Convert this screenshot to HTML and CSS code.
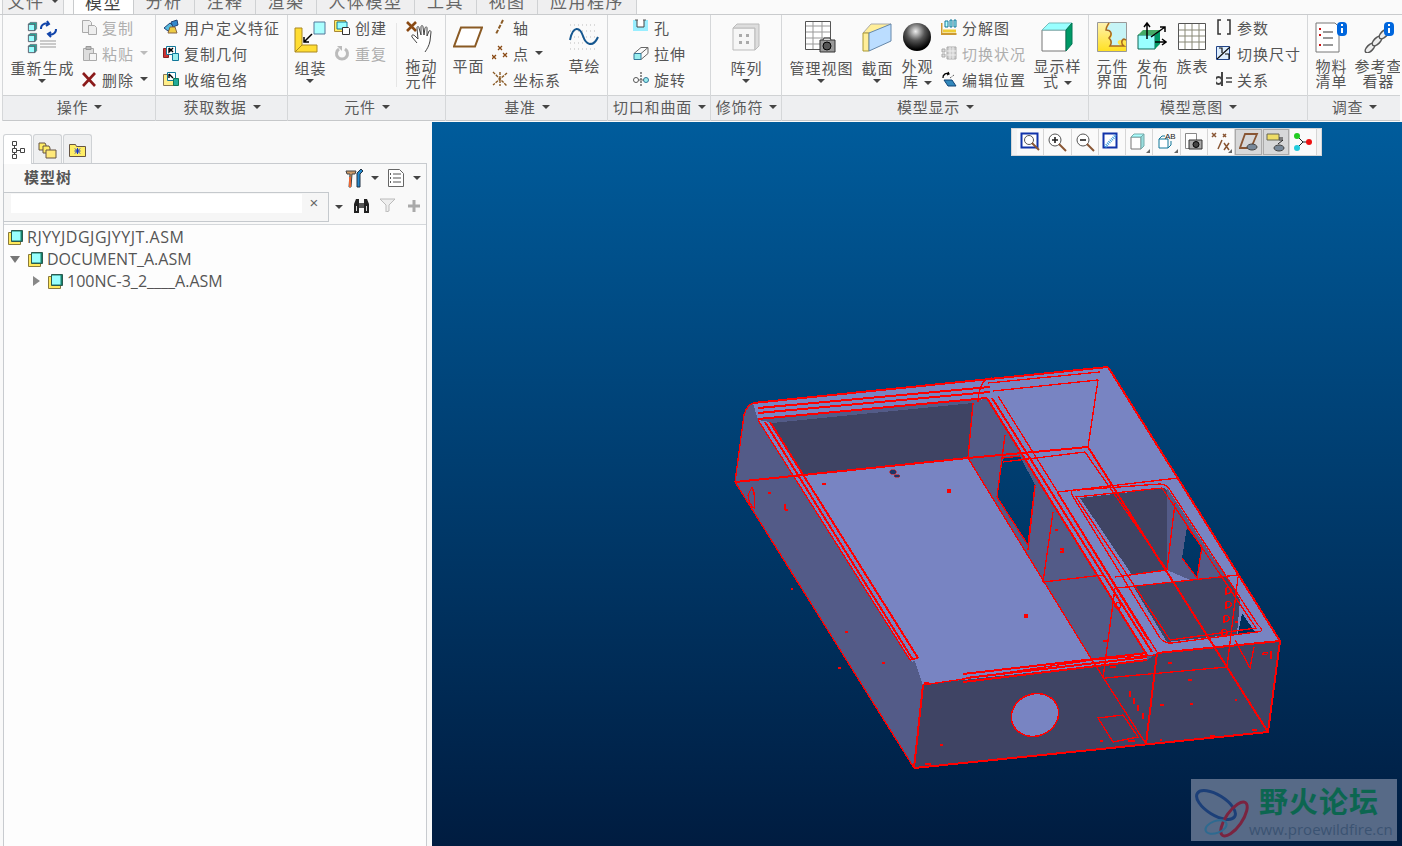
FILE: index.html
```html
<!DOCTYPE html>
<html lang="zh">
<head>
<meta charset="utf-8">
<title>模型树</title>
<link rel="stylesheet" href="styles.css">
</head>
<body>
<svg class="defs" width="0" height="0">
  <symbol id="cube" viewBox="0 0 12 12"><path d="M1.500 3.500h7v7h-7z" fill="#9ff" stroke="#556"/><path d="M1.500 3.500l2-2h7v7l-2 2v-7z" fill="#2a9" stroke="#556" stroke-width=".7"/></symbol>
  <symbol id="asm" viewBox="0 0 15 15"><path d="M.5 2.500h12v12H.5z" fill="#ffe95c" stroke="#8a7a3a"/><path d="M3.500.5h11v11h-11z" fill="#17806a" stroke="#2a5a50"/><path d="M4 1.500h8.500v9H4z" fill="#9ff"/></symbol>
</svg>
<nav class="tabs">
  <div class="tab t-file">文件<i class="caret"></i></div>
  <div class="tab active">模型</div>
  <div class="tab t61">分析</div>
  <div class="tab t61">注释</div>
  <div class="tab t61">渲染</div>
  <div class="tab t98">人体模型</div>
  <div class="tab t62">工具</div>
  <div class="tab t61">视图</div>
  <div class="tab t99">应用程序</div>
</nav>
<header class="ribbon">
  <section class="group g153">
    <div class="gbody">
      <div class="big w78"><div class="ic"><svg width="32" height="34" viewBox="0 0 32 34"><use href="#cube" x="1" y="1" width="11" height="11"/><use href="#cube" x="1" y="12" width="11" height="11"/><use href="#cube" x="1" y="23" width="11" height="11"/><path d="M15 9a5 5 0 0 1 7-5M21 1l2 3-3 2M30 9a5 5 0 0 1-7 5M25 17l-3-3 3-2" fill="none" stroke="#14a" stroke-width="2"/><path d="M14 21h16M14 24h16M14 27h16" stroke="#999"/></svg></div><div class="lbl one">重新生成</div><i class="caret under"></i></div>
      <div class="small">
        <div class="row off"><svg class="i" viewBox="0 0 16 16"><path d="M1.500 1.500h7l2 2v3h-3v7h-6z" fill="#eee" stroke="#aaa"/><path d="M7.500 6.500h6l2 2v7h-8z" fill="#eee" stroke="#aaa"/></svg>复制</div>
        <div class="row off"><svg class="i" viewBox="0 0 16 16"><path d="M2.500 3.500h10v12h-10z" fill="#ddd" stroke="#aaa"/><path d="M5 1.500h5v3H5z" fill="#bbb" stroke="#999"/><path d="M8.500 8.500h7v7h-7z" fill="#f4f4f4" stroke="#aaa"/></svg>粘贴<i class="caret soft"></i></div>
        <div class="row"><svg class="i" viewBox="0 0 16 16"><path d="M2 2l12 13M14 2L2 15" stroke="#8b1a1a" stroke-width="2.600"/></svg>删除<i class="caret"></i></div>
      </div>
    </div>
    <div class="glabel">操作<i class="caret"></i></div>
  </section>
  <section class="group g132">
    <div class="gbody pad7">
      <div class="small">
        <div class="row"><svg class="i" viewBox="0 0 16 16"><path d="M1 9l6-5 3 3-5 5z" fill="#5bd" stroke="#247"/><path d="M8 3l6-2 1 5-5 2z" fill="#38c" stroke="#247"/><path d="M7 8l5 0 2 6H5z" fill="#ec4" stroke="#864"/></svg>用户定义特征</div>
        <div class="row"><svg class="i" viewBox="0 0 16 16"><path d="M.5 3.500h5v9h-5z" fill="#c33" stroke="#822"/><path d="M3.500 1.500h9v8h-9z" fill="#fff" stroke="#179"/><path d="M6 3l4 4M6 3v4l4-4" stroke="#000" stroke-width="1.400" fill="none"/><path d="M9.500 8.500h6v7h-6z" fill="#9ee" stroke="#179"/></svg>复制几何</div>
        <div class="row"><svg class="i" viewBox="0 0 16 16"><path d="M.5 3.500h11v11H.5z" fill="#fe8" stroke="#875"/><path d="M4.500 1.500h8v8h-8z" fill="#fff" stroke="#179"/><path d="M6 3l4 4M6 3v4" stroke="#000" stroke-width="1.400" fill="none"/><path d="M10.500 7.500h5v7h-5z" fill="#2a9" stroke="#175"/></svg>收缩包络</div>
      </div>
    </div>
    <div class="glabel">获取数据<i class="caret"></i></div>
  </section>
  <section class="group g158">
    <div class="gbody">
      <div class="big w44"><div class="ic"><svg width="32" height="32" viewBox="0 0 32 32"><path d="M1 7h7v17h15v7H1z" fill="#fd3" stroke="#a82"/><path d="M1 31l7-7" stroke="#a82"/><path d="M20 1h11v12H20z" fill="#aff" stroke="#579"/><path d="M18 13L10 21M10 16v5h5" stroke="#000" stroke-width="1.500" fill="none"/></svg></div><div class="lbl one">组装</div><i class="caret under"></i></div>
      <div class="small w62 ml2">
        <div class="row"><svg class="i" viewBox="0 0 16 16"><path d="M.5 1.500h11v11H.5z" fill="#fe6" stroke="#a83"/><path d="M3 3h10v7H3z" fill="#9ff" stroke="#179"/><path d="M8.500 8.500h6l1 1v6h-7z" fill="#fff" stroke="#333"/></svg>创建</div>
        <div class="row off"><svg class="i" viewBox="0 0 16 16"><path d="M11 4a5.500 5.500 0 1 1-6 0" fill="none" stroke="#bbb" stroke-width="3"/><path d="M3 1h5v5z" fill="#bbb"/></svg>重复</div>
      </div>
      <div class="vsep"></div>
      <div class="big w48"><div class="ic"><svg width="31" height="32" viewBox="0 0 31 32"><path d="M1 1l9 9M10 1L1 10" stroke="#8a4a14" stroke-width="2.600"/><path d="M11 22l-5-6c-1-2 1-3 3-1l3 3-1-11c0-2 2-2 2 0l2 7 0-8c0-2 2-2 2 0l1 8 1-7c1-2 2-1 2 0l0 8 2-5c1-1 2 0 2 1l-1 9c-1 5-3 8-5 11" fill="#fff" stroke="#444"/></svg></div><div class="lbl">拖动<br>元件</div></div>
    </div>
    <div class="glabel">元件<i class="caret"></i></div>
  </section>
  <section class="group g162">
    <div class="gbody">
      <div class="big w44"><div class="ic"><svg width="30" height="22" viewBox="0 0 30 22"><path d="M8 1.500h21L22 20.500H1z" fill="#fff" stroke="#8a5a24" stroke-width="2"/></svg></div><div class="lbl">平面</div></div>
      <div class="small w70 ml2">
        <div class="row"><svg class="i" viewBox="0 0 16 16"><path d="M11 1L4 15" stroke="#8a5a24" stroke-width="2" stroke-dasharray="4 1.500"/></svg>轴</div>
        <div class="row"><svg class="i" viewBox="0 0 16 16"><path d="M6 1l4 4M10 1L6 5M0 10l4 4M4 10l-4 4M11 8l4 4M15 8l-4 4" stroke="#8a4a14" stroke-width="1.300"/></svg>点<i class="caret"></i></div>
        <div class="row"><svg class="i" viewBox="0 0 16 16"><path d="M1 1l14 14M15 2L1 14M8 1v14" stroke="#8a5a24" stroke-width="1.400" stroke-dasharray="3 1"/></svg>坐标系</div>
      </div>
      <div class="big w44"><div class="ic"><svg width="30" height="28" viewBox="0 0 30 28"><path d="M1 2h28M1 8h28M1 14h28M1 20h28M1 26h28" stroke="#bbb" stroke-dasharray="1 3"/><path d="M1 17c3-15 10-13 13-4s10 12 15 1" fill="none" stroke="#14568f" stroke-width="2"/></svg></div><div class="lbl">草绘</div></div>
    </div>
    <div class="glabel">基准<i class="caret"></i></div>
  </section>
  <section class="group g103">
    <div class="gbody pad25">
      <div class="small">
        <div class="row"><svg class="i" viewBox="0 0 16 16"><path d="M0 1h15v11H0z" fill="#9ef"/><path d="M4 1v7h7V1" fill="#fff" stroke="#444"/><path d="M2 1h3M10 1h3" stroke="#555"/></svg>孔</div>
        <div class="row"><svg class="i" viewBox="0 0 16 16"><path d="M1 8.500h7v6H1z" fill="#9ee" stroke="#379"/><path d="M1 8.500l7-6h7l-7 6M8 14.500l7-6v-6" fill="none" stroke="#666"/></svg>拉伸</div>
        <div class="row"><svg class="i" viewBox="0 0 16 16"><circle cx="3" cy="9" r="2.500" fill="#fff" stroke="#555"/><circle cx="13" cy="9" r="2.500" fill="#9ee" stroke="#379"/><path d="M8 1v14" stroke="#222" stroke-dasharray="2 1"/><path d="M5 9h6" stroke="#666"/></svg>旋转</div>
      </div>
    </div>
    <div class="glabel">切口和曲面<i class="caret"></i></div>
  </section>
  <section class="group g71">
    <div class="gbody">
      <div class="big w70"><div class="ic"><svg width="28" height="28" viewBox="0 0 28 28"><path d="M1 5h22v22H1z" fill="#f6f6f6" stroke="#bbb"/><path d="M1 5l4-4h22v22l-4 4V5z" fill="#ddd" stroke="#bbb"/><path d="M7 11h3v3H7zM14 11h3v3h-3zM7 18h3v3H7zM14 18h3v3h-3z" fill="#aaa"/></svg></div><div class="lbl one">阵列</div><i class="caret under"></i></div>
    </div>
    <div class="glabel">修饰符<i class="caret"></i></div>
  </section>
  <section class="group g307">
    <div class="gbody">
      <div class="big w78"><div class="ic"><svg width="32" height="32" viewBox="0 0 32 32"><path d="M.5.500h25v28H.5z" fill="#fff" stroke="#555"/><path d="M1 5h24M1 11h24M1 17h24M1 23h24M8 1v27M17 1v27" stroke="#999"/><path d="M15 19h15v12H15z" fill="#999" stroke="#333"/><circle cx="22" cy="25" r="4" fill="#555" stroke="#000"/><path d="M18 19l1-2h6l1 2" fill="#ddd" stroke="#333"/></svg></div><div class="lbl one">管理视图</div><i class="caret under"></i></div>
      <div class="big w34"><div class="ic"><svg width="30" height="30" viewBox="0 0 30 30"><path d="M1 11L9 2h20L11 11z" fill="#fe9" stroke="#aaa"/><path d="M1 11h6v18H1z" fill="#fe9" stroke="#a93"/><path d="M7 29V11L29 2v17z" fill="#bdf" stroke="#68a"/></svg></div><div class="lbl one">截面</div><i class="caret under"></i></div>
      <div class="big w46"><div class="ic"><svg width="28" height="28" viewBox="0 0 28 28"><defs><radialGradient id="sph" cx=".45" cy=".3" r=".65"><stop offset="0" stop-color="#eee"/><stop offset=".5" stop-color="#555"/><stop offset="1" stop-color="#000"/></radialGradient></defs><circle cx="14" cy="14" r="14" fill="url(#sph)"/></svg></div><div class="lbl">外观<br>库<i class="caret in"></i></div></div>
      <div class="small w93 ml1">
        <div class="row"><svg class="i" viewBox="0 0 16 16"><path d="M.5 4v11h15M.5 15" fill="none" stroke="#c93" stroke-width="2"/><path d="M4 8h3V2H4zM9 8h2V1H9zM13 8h2V1h-2z" fill="#bff" stroke="#179"/><path d="M2 12h13" stroke="#ec3" stroke-width="3"/></svg>分解图</div>
        <div class="row off"><svg class="i" viewBox="0 0 16 16"><path d="M1 4h3v3H1zM1 9h3v3H1z" fill="#ddd" stroke="#aaa"/><path d="M6 2h9v12H6z" fill="#ccc" stroke="#aaa"/><path d="M9 2v12M12 2v12M6 6h9M6 10h9" stroke="#eee"/></svg>切换状况</div>
        <div class="row"><svg class="i" viewBox="0 0 16 16"><path d="M3 9h8l4 6H7z" fill="#38b" stroke="#147"/><path d="M2 7a4 4 0 0 1 6-4M7 1l1 2-2 1" fill="none" stroke="#000" stroke-width="1.300"/><path d="M9 7l4-3" stroke="#333" stroke-dasharray="1 1"/></svg>编辑位置</div>
      </div>
      <div class="big w46"><div class="ic"><svg width="32" height="30" viewBox="0 0 32 30"><path d="M1 8h24v21H1z" fill="#fff" stroke="#777"/><path d="M1 8l7-7h23l-6 7z" fill="#9ff" stroke="#7bb"/><path d="M25 8l6-7v21l-6 7z" fill="#096" stroke="#075"/></svg></div><div class="lbl">显示样<br>式<i class="caret in"></i></div></div>
    </div>
    <div class="glabel">模型显示<i class="caret"></i></div>
  </section>
  <section class="group g219">
    <div class="gbody">
      <div class="big w46"><div class="ic"><svg width="30" height="30" viewBox="0 0 30 30"><defs><linearGradient id="pz" x1="0" y1="0" x2="0" y2="1"><stop offset="0" stop-color="#fff2b0"/><stop offset="1" stop-color="#ffe020"/></linearGradient></defs><path d="M.5.500h29v29H.5z" fill="url(#pz)" stroke="#999"/><path d="M14 1h15v17h-6c-3 0-3 4 0 5v1H13c2-3 2-5 0-7 4-3 2-8-4-8 0-3 3-5 5-8z" fill="#c6f4f6"/><path d="M12 1c-2 3-3 4-3 7 5 0 7 4 3 8 3 3 3 5 1 8h14c-3-2-3-6 0-7l2 1" fill="none" stroke="#a86a20" stroke-width="1.500"/></svg></div><div class="lbl">元件<br>界面</div></div>
      <div class="big w34"><div class="ic"><svg width="30" height="32" viewBox="0 0 30 32"><path d="M1 14h17v14H1z" fill="#9ff" stroke="#165"/><path d="M18 14l5-5v14l-5 5z" fill="#096"/><path d="M1 14l5-5h17l-5 5z" fill="#4a6"/><path d="M10 18V2M7 6l3-4 3 4M14 16L28 6M23 6h5v5M18 21h11M25 18l4 3-4 3" stroke="#000" stroke-width="1.500" fill="none"/></svg></div><div class="lbl">发布<br>几何</div></div>
      <div class="big w46"><div class="ic"><svg width="28" height="28" viewBox="0 0 28 28"><path d="M.5.500h27v26H.5z" fill="#fff" stroke="#555"/><path d="M1 7h26M1 13h26M1 19h26M7 1v25M14 1v25M21 1v25" stroke="#887"/></svg></div><div class="lbl">族表</div></div>
      <div class="small w90 ml1">
        <div class="row"><svg class="i" viewBox="0 0 16 16"><path d="M5 1H2v14h3M11 1h3v14h-3" fill="none" stroke="#333" stroke-width="1.500"/></svg>参数</div>
        <div class="row"><svg class="i" viewBox="0 0 16 16"><path d="M.5 1.500h13v13H.5z" fill="#def" stroke="#248"/><path d="M1 14L14 2M3 3h3v5M9 9h4v5" stroke="#111" stroke-width="1.200" fill="none"/></svg>切换尺寸</div>
        <div class="row"><svg class="i" viewBox="0 0 16 16"><path d="M6 1v14M6 9a3.500 3.500 0 1 0 0 1" fill="none" stroke="#444" stroke-width="2"/><path d="M10 7h6M10 11h6" stroke="#444" stroke-width="1.600"/></svg>关系</div>
      </div>
    </div>
    <div class="glabel">模型意图<i class="caret"></i></div>
  </section>
  <section class="group g95">
    <div class="gbody">
      <div class="big w46"><div class="ic"><svg width="33" height="32" viewBox="0 0 33 32"><path d="M1 2h19l4 4v25H1z" fill="#fff" stroke="#777"/><path d="M8 11h10M8 17h10M8 24h10" stroke="#333"/><path d="M4 8h2M4 14h2M4 24h2" stroke="#c11" stroke-width="2"/><rect x="22" y="1" width="10" height="14" rx="4" fill="#06d"/><path d="M27 3v2M27 7v5" stroke="#fff" stroke-width="2"/></svg></div><div class="lbl">物料<br>清单</div></div>
      <div class="big w48"><div class="ic"><svg width="33" height="32" viewBox="0 0 33 32"><g fill="#eee" stroke="#555" stroke-width="1.500"><ellipse cx="8" cy="27" rx="6" ry="3" transform="rotate(-45 8 27)"/><ellipse cx="15" cy="20" rx="6" ry="3" transform="rotate(-45 15 20)"/><ellipse cx="22" cy="13" rx="6" ry="3" transform="rotate(-45 22 13)"/></g><rect x="22" y="1" width="10" height="14" rx="4" fill="#06d"/><path d="M27 3v2M27 7v5" stroke="#fff" stroke-width="2"/></svg></div><div class="lbl nowrap">参考查<br>看器</div></div>
    </div>
    <div class="glabel">调查<i class="caret"></i></div>
  </section>
</header>
<main class="main">
  <aside class="side">
    <div class="sidetabs">
      <div class="stab on"><svg width="14" height="18" viewBox="0 0 14 18"><path d="M1.500.500h4v4h-4zM1.500 7.500h4v4h-4zM1.500 13.500h4v4h-4zM9.500 7.500h4v4h-4zM3.500 4.500v3M3.500 11.500v2M5.500 9.500h4" fill="#fff" stroke="#444"/></svg></div>
      <div class="stab"><svg width="19" height="19" viewBox="0 0 19 19"><path d="M1 3h6l1 2v5H1z" fill="#fe6" stroke="#654"/><path d="M5 6h6l1 2v5H5z" fill="#fe6" stroke="#654"/><path d="M8 10h10v8H8z" fill="#ffe97a" stroke="#654"/></svg></div>
      <div class="stab"><svg width="17" height="15" viewBox="0 0 17 15"><path d="M.5 2.500h6l1 2h9v10H.5z" fill="#fe6" stroke="#654"/><path d="M8.500 6v6M5.500 9h6M6 6.500l5 5M11 6.500l-5 5" stroke="#13c"/></svg></div>
    </div>
    <div class="panel">
      <div class="phead">
        <strong class="ptitle">模型树</strong>
        <svg class="pic" width="19" height="20" viewBox="0 0 19 20"><path d="M1 3h10l-1 3H7l-1 13H4L5 6H2z" fill="#c96" stroke="#444"/><path d="M4 9h2v10H4z" fill="#e63"/><path d="M12 5l4-4 2 2-3 3v13h-3z" fill="#28c" stroke="#234"/></svg>
        <i class="caret gap7"></i>
        <svg class="pic pic2" width="16" height="18" viewBox="0 0 16 18"><path d="M.5.500h11l4 4v13H.5z" fill="#fff" stroke="#666"/><path d="M5 5h8M5 9h8M5 13h8" stroke="#555"/><path d="M2 5h1M2 9h1M2 13h1" stroke="#222" stroke-width="1.500"/></svg>
        <i class="caret gap9"></i>
      </div>
      <div class="searchrow">
        <div class="searchbox"><span class="searchinput"></span><span class="clear">×</span></div>
        <i class="caret gap6"></i>
        <svg class="sic" width="17" height="16" viewBox="0 0 17 16"><path d="M1 6l2-5h3v14H1zM16 6l-2-5h-3v14h5z" fill="#222"/><path d="M6 5h5v5H6z" fill="#555"/><path d="M3 8h1v5H3zM13 8h1v5h-1z" fill="#ddd"/></svg>
        <svg class="sic sic2" width="17" height="14" viewBox="0 0 17 14"><path d="M1 1h15l-6 6v6l-3 1V7z" fill="#eee" stroke="#bbb"/></svg>
        <svg class="sic sic3" width="12" height="12" viewBox="0 0 12 12"><path d="M4.500 0h3v4.500H12v3H7.500V12h-3V7.500H0v-3h4.500z" fill="#aaa"/></svg>
      </div>
      <ul class="tree">
        <li class="node lvl0 wide"><svg class="ti" width="15" height="15"><use href="#asm"/></svg>RJYYJDGJGJYYJT.ASM</li>
        <li class="node lvl0"><i class="arrow down"></i><svg class="ti" width="15" height="15"><use href="#asm"/></svg>DOCUMENT_A.ASM</li>
        <li class="node lvl1"><i class="arrow right"></i><svg class="ti" width="15" height="15"><use href="#asm"/></svg>100NC-3_2____A.ASM</li>
      </ul>
    </div>
  </aside>
  <section class="view">
    <svg class="model" viewBox="432 122 970 724" width="970" height="724">
      <defs><linearGradient id="bg" gradientUnits="userSpaceOnUse" x1="0" y1="122" x2="0" y2="846"><stop offset="0" stop-color="#005c9c"/><stop offset="1" stop-color="#001c40"/></linearGradient></defs>
      <path class="med" d="M735 482L744 415Q747 405 753 403L1108 367L1280 641L1268 732L914 768Z"/>
      <path class="lit" d="M753 403L1108 367L1280 641L1157 655L1147 655L987 399L758 420Z"/>
      <path class="lit" d="M758 420L770 422L918 658L912 662Z"/>
      <path class="dark" d="M772 423L973 403L968 458L803 475Z"/>
      <path class="lit" d="M803 475L968 458L1092 660L923 685L915 662Z"/>
      <path class="med" d="M973 403L987 399L1147 655L1092 660L968 458Z"/>
      <path class="hole" d="M1003 458L1020 456L1035 485L1028 545L997 497Z"/>
      <path class="lit" d="M987 399L996 398L1157 652L1147 655Z"/>
      <path class="dark" d="M1080 498L1165 488L1175 503L1167 570L1132 575Z"/>
      <path class="med" d="M1167 488L1228 580L1195 582L1167 570Z"/>
      <path class="hole" d="M1187 527L1202 547L1197 578L1182 558Z"/>
      <path class="dark" d="M1133 586L1173 582L1227 577L1240 600L1237 634L1167 642Z"/>
      <path class="hole" d="M1242 613L1255 632L1238 634Z"/>
      <path class="lit" d="M963 674L1147 653L1147 660L963 682Z"/>
      <path class="dark" d="M923 685L963 680L1147 660L1157 653L1280 641L1268 732L914 768Z"/>
      <ellipse class="lit holeline" cx="1035" cy="715" rx="24" ry="21" transform="rotate(-22 1035 715)"/>
      <path class="r2" d="M753 403L1108 367M914 768L923 685M1157 653L1146 744M1157 653L1280 641M1088 447L1268 732M770 422L918 658M765 422L913 660M987 398L1147 655M992 398L1152 652M1108 367L1280 641L1268 732L914 768M758 419L987 398M758 408L990 387M758 413L990 392M735 482L968 458L1088 447M963 674L1147 653M963 682L1147 660M966 678L1147 657"/>
      <path class="r1" d="M735 482L744 415Q747 405 753 403M735 482L914 768M923 685L1092 660M758 420L910 660L918 658M973 403L968 458M968 458L1092 660L1146 744M1005 435L997 497L1028 545L1035 485M1003 458L1020 456M998 396L1157 652M988 383L1100 372M993 391L1098 380M1098 380L1088 447M1003 462L1085 452L1167 570M1058 492L1178 478L1280 641M1057 492L1148 640M1072 495Q1070 488 1078 490L1160 484Q1167 484 1170 490L1258 625Q1266 632 1256 632L1172 643Q1165 644 1160 638Z M1076 497L1162 488L1256 628L1170 640Z M1043 582L1103 575M1115 577L1167 570M1117 588L1238 575M1053 512L1043 582M1035 487L1028 550M1115 588L1103 678M1105 678L1227 667M1238 577L1227 667M1235 640L1250 668L1254 647M1098 718L1123 715L1138 737L1113 742Z M1175 503L1167 570M1187 527L1202 547L1197 578L1182 558M1090 660L1155 655M985 380Q979 386 978 402M985 380L992 378"/>
      <path class="r1" d="M1130 691v6M1134 698v6M1138 705v6M1143 713v6M1226 602a3 3 0 1 1 4 5l-4 1zM1224 616a3 3 0 1 1 4 5l-4 1zM1222 630a3 3 0 1 1 4 5l-4 1zM1226 588a3 3 0 1 1 4 5l-4 1zM1115 605a3 3 0 1 1 6 1a3 3 0 1 1-6-1M752 487Q756 495 754 508Q749 505 748 495ZM785 504v6M1262 654q4-3 6-1q-2 3-6 1M1271 651v8"/>
      <path class="dots" d="M822 484h4M947 490h3v2h-3M1063 513h1M768 493h3M785 510h3M1060 549h3v3h-3M1024 615h3v2h-3M845 632h3M882 663h3M838 668h3M791 589h2M1103 641h4M1110 667h6M1168 663h4M1188 680h4M1235 700h2M1190 704h3M1160 705h4M1160 740h2M1252 730h5M1210 736h5M1100 741h3M925 764h6M940 745h3M924 683h5M1128 741h7M1235 622h3M1055 530h3"/>
      <ellipse class="blob" cx="893" cy="472" rx="3.500" ry="2.500"/><ellipse class="blob" cx="897" cy="476" rx="3" ry="1.500"/>
    </svg>
    <div class="viewbar">
      <button class="vb"><svg width="20" height="20" viewBox="0 0 20 20"><path d="M1.500 1.500h16v14h-16z" fill="#fff" stroke="#13a" stroke-width="2"/><circle cx="9" cy="8" r="4.500" fill="#fff" stroke="#555"/><path d="M12 11l7 7" stroke="#853" stroke-width="2"/></svg></button>
      <button class="vb"><svg width="20" height="20" viewBox="0 0 20 20"><circle cx="8" cy="8" r="6" fill="#fff" stroke="#555"/><path d="M5 8h6M8 5v6" stroke="#222" stroke-width="1.600"/><path d="M12 12l7 7" stroke="#853" stroke-width="2"/></svg></button>
      <button class="vb"><svg width="20" height="20" viewBox="0 0 20 20"><circle cx="8" cy="8" r="6" fill="#fff" stroke="#555"/><path d="M5 8h6" stroke="#222" stroke-width="1.600"/><path d="M12 12l7 7" stroke="#853" stroke-width="2"/></svg></button>
      <button class="vb"><svg width="20" height="20" viewBox="0 0 20 20"><path d="M1.500 1.500h13v14h-13z" fill="#fff" stroke="#13a" stroke-width="2"/><path d="M3 15L14 3" stroke="#39d" stroke-width="3" stroke-dasharray="1 1"/></svg></button>
      <button class="vb"><svg width="20" height="20" viewBox="0 0 20 20"><path d="M2 5h10v12H2z" fill="#fff" stroke="#777"/><path d="M2 5l3-3h10l-3 3z" fill="#aff" stroke="#7aa"/><path d="M12 5l3-3v12l-3 3z" fill="#9dd" stroke="#7aa"/></svg><i class="corner"></i></button>
      <button class="vb"><svg width="20" height="20" viewBox="0 0 20 20"><path d="M2 7h9v9H2z" fill="#fff" stroke="#179"/><path d="M2 7l3-3h3M11 16l3-3V9" fill="none" stroke="#179"/><text x="8" y="7" class="ab">AB</text></svg><i class="corner"></i></button>
      <button class="vb"><svg width="20" height="20" viewBox="0 0 20 20"><path d="M1.500 1.500h11v15h-11z" fill="#fff" stroke="#888"/><path d="M5 8h13v9H5z" fill="#aaa" stroke="#333"/><circle cx="12" cy="12.500" r="3" fill="#444" stroke="#000"/></svg></button>
      <button class="vb"><svg width="20" height="20" viewBox="0 0 20 20"><path d="M1 1l4 4M5 1L1 5M12 2l3 3M15 2l-3 3M7 17l4-9M13 11l5 7M18 11l-5 7" stroke="#853" stroke-width="1.500"/></svg><i class="corner"></i></button>
      <button class="vb on"><svg width="20" height="20" viewBox="0 0 20 20"><path d="M6 2h12l-6 14H1z" fill="none" stroke="#853" stroke-width="1.800"/><ellipse cx="13" cy="15" rx="5" ry="3" fill="#789" stroke="#444"/></svg></button>
      <button class="vb on"><svg width="20" height="20" viewBox="0 0 20 20"><path d="M1 2h12v6H1z" fill="#ed6" stroke="#665"/><path d="M13 6h4M12 12l5-4h-4" fill="none" stroke="#222"/><ellipse cx="13" cy="16" rx="5" ry="3" fill="#789" stroke="#444"/></svg></button>
      <button class="vb"><svg width="20" height="20" viewBox="0 0 20 20"><path d="M5 5l5 5-5 5M10 10h6" fill="none" stroke="#222"/><circle cx="4" cy="4" r="3" fill="#2c2"/><circle cx="4" cy="16" r="3" fill="#2cd"/><circle cx="16" cy="10" r="3" fill="#e11"/></svg></button>
    </div>
    <div class="mark">
      <svg class="marklogo" width="62" height="60" viewBox="0 0 62 60"><ellipse cx="22" cy="24" rx="22" ry="10" transform="rotate(32 22 24)" fill="none" stroke="#1c3f78" stroke-width="3"/><ellipse cx="40" cy="38" rx="8" ry="20" transform="rotate(35 40 38)" fill="none" stroke="#7a2440" stroke-width="3"/><ellipse cx="22" cy="46" rx="11" ry="6" transform="rotate(-20 22 46)" fill="none" stroke="#2e6a90" stroke-width="2"/></svg>
      <div class="marktext">
        <div class="marktitle">野火论坛</div>
        <div class="markurl">www.proewildfire.cn</div>
      </div>
    </div>
  </section>
</main>
</body>
</html>
```
FILE: styles.css
```css
*{box-sizing:border-box}
html,body{margin:0;height:100%;overflow:hidden}
body{width:1402px;height:846px;background:#fafafa;color:#555;font:15px/15px "Noto Sans CJK SC","Noto Sans",sans-serif;display:flex;flex-direction:column}
.defs{position:absolute}
.caret{display:inline-block;width:0;height:0;border:4px solid transparent;border-top:4px solid #444;border-bottom:0;vertical-align:middle;margin-left:6px}
.caret.soft{border-top-color:#bbb}
.caret.under{margin:4px 0 0 -1px;display:block}
.caret.in{margin-left:5px}

.tabs{height:15px;display:flex;align-items:flex-end;overflow:hidden;padding-left:2px;border-bottom:1px solid #c9cbcd;background:#fafafa;flex:none}
.tab{flex:none;height:24px;background:#efeff0;border-right:1px solid #cfd1d3;display:flex;align-items:center;justify-content:center;font-size:17px;letter-spacing:1.500px;color:#666;line-height:20px;padding-bottom:2px}
.t-file{width:62px;margin-right:9px;border-left:1px solid #cfd1d3}
.active{width:61px;background:#fff;color:#444;border-left:1px solid #c9cbcd;border-right:1px solid #c9cbcd;height:25px;position:relative;top:1px}
.t61{width:61px}.t62{width:62px}.t98{width:98px}.t99{width:99px}

.ribbon{display:flex;flex:none;padding-left:2px;height:107px;background:#fafafa}
.group{display:flex;flex-direction:column;flex:none;border-left:1px solid #d5d7d9;overflow:hidden;height:106px}
.g153{width:153px}.g132{width:132px}.g158{width:158px}.g162{width:162px}.g103{width:103px}.g71{width:71px}.g307{width:307px}.g219{width:219px}.g95{width:93px}
.gbody{height:80px;display:flex;flex:none}
.pad7{padding-left:7px}.pad25{padding-left:25px}
.glabel{height:26px;flex:none;background:#eeeff1;border-top:1px solid #d0d2d4;border-bottom:1px solid #c6c8ca;display:flex;align-items:center;justify-content:center;letter-spacing:.8px;color:#5a5a5a;padding:0 0 3px 1px}
.big{display:flex;flex-direction:column;align-items:center;flex:none}
.w34{width:34px}.w44{width:44px}.w46{width:46px}.w48{width:48px}.w70{width:70px}.w78{width:78px}
.ic{height:43px;display:flex;align-items:center;justify-content:center;flex:none}
.lbl{text-align:center;letter-spacing:1px;color:#555;white-space:nowrap;padding-left:1px}
.lbl.one{margin-top:2px}
.small{display:flex;flex-direction:column;flex:none}
.w62{width:62px}.w70{width:70px}.w90{width:90px}.w93{width:93px}
.ml1{margin-left:1px}.ml2{margin-left:2px}
.row{height:26px;display:flex;align-items:center;letter-spacing:1px;white-space:nowrap;padding-bottom:2px}
.row .i{width:16px;height:16px;margin-right:5px;flex:none}
.off{color:#aeaeae}
.vsep{width:1px;height:64px;margin-top:8px;background:#e6e6e6;flex:none}

.main{flex:1;display:flex;min-height:0}
.side{width:432px;flex:none;display:flex;flex-direction:column;padding:12px 5px 0 3px;background:#f9f9f9}
.sidetabs{display:flex;height:29px;flex:none}
.stab{width:29px;margin-right:1px;height:29px;background:#eff0f1;border:1px solid #cfd2d5;border-bottom:0;border-radius:3px 3px 0 0;display:flex;align-items:center;justify-content:center}
.stab.on{width:29px;background:#fff;height:30px;position:relative;z-index:1}
.panel{flex:1;border:1px solid #c8cbcf;border-bottom:0;background:#fdfdfd;min-height:0}
.phead{height:28px;display:flex;align-items:center;background:#f9f9f9}
.ptitle{margin:0 auto 3px 20px;letter-spacing:1px;color:#555;font-weight:700}
.gap7{margin:0 9px 0 7px}.gap9{margin:0 5px 0 9px}.gap6{margin:0 10px 0 6px}
.searchrow{height:33px;display:flex;align-items:flex-start;background:#f9f9f9;border-bottom:1px solid #d5d8db}
.searchrow .sic{margin-top:6px}
.searchrow .caret{margin-top:13px}
.searchbox{width:326px;height:30px;margin-left:-1px;border:1px solid #c5c9cd;background:#f6f6f6;display:flex;padding:1px 0 0 7px}
.searchinput{width:291px;height:19px;background:#fff}
.clear{width:24px;text-align:center;font:15px/18px "Liberation Sans",sans-serif;color:#666}
.sic2{margin-left:9px}.searchrow .sic3{margin-left:12px;margin-top:8px}
.tree{list-style:none;margin:0;padding:1px 0 0}
.node{height:22px;display:flex;align-items:center;font:16px/22px "Open Sans",sans-serif;color:#555;white-space:nowrap}
.node.wide{letter-spacing:.5px}
.lvl0{padding-left:4px}.lvl1{padding-left:24px}
.ti{margin-right:4px;flex:none}
.arrow{width:20px;height:22px;flex:none;position:relative}
.arrow::before{content:"";position:absolute;border:5px solid transparent}
.arrow.down::before{left:2px;top:8px;border-top:7px solid #777;border-bottom:0}
.arrow.right::before{left:5px;top:6px;border-left:7px solid #888;border-right:0}

.view{flex:1;position:relative;overflow:hidden;background:linear-gradient(#005c9c,#001c40)}
.model{display:block;shape-rendering:crispEdges}
.med{fill:#535b88}.lit{fill:#7884c2}.dark{fill:#3f4464}.hole{fill:url(#bg)}
.holeline{stroke:#f00;stroke-width:1.500}
.r2,.r1,.dots{fill:none;stroke:#f00}
.r2{stroke-width:2}.r1{stroke-width:1.300}.dots{stroke-width:2}
.blob{fill:#1c3566;stroke:#c22;stroke-width:.6}
.viewbar{position:absolute;top:6px;left:579px;width:311px;height:28px;background:#f3f3f3;border:1px solid #d5d6d8;padding-left:5px;display:flex}
.vb{width:27.300px;height:26px;padding:0;margin:0;background:#fafafa;border:0;border-right:1px solid #d6d6d6;display:flex;align-items:center;justify-content:center;position:relative;flex:none}
.vb.on{background:#d7d8d9;box-shadow:inset 0 0 0 1px #aaa}
.corner{position:absolute;right:2px;bottom:2px;border:2px solid transparent;border-right-color:#666;border-bottom-color:#666}
.ab{font:8px "Liberation Sans",sans-serif;fill:#222}
.mark{position:absolute;left:759px;top:657px;width:206px;height:62px;background:#576a87;display:flex}
.marklogo{position:absolute;left:3px;top:2px}
.marktext{margin-left:58px;display:flex;flex-direction:column}
.marktitle{margin:5px 0 0 10px;font:700 29px/32px "Noto Sans CJK SC",sans-serif;color:#0c6650;letter-spacing:1px;white-space:nowrap}
.markurl{margin-top:4px;font:15px/18px "Open Sans",sans-serif;color:#3b5372;white-space:nowrap}
```
